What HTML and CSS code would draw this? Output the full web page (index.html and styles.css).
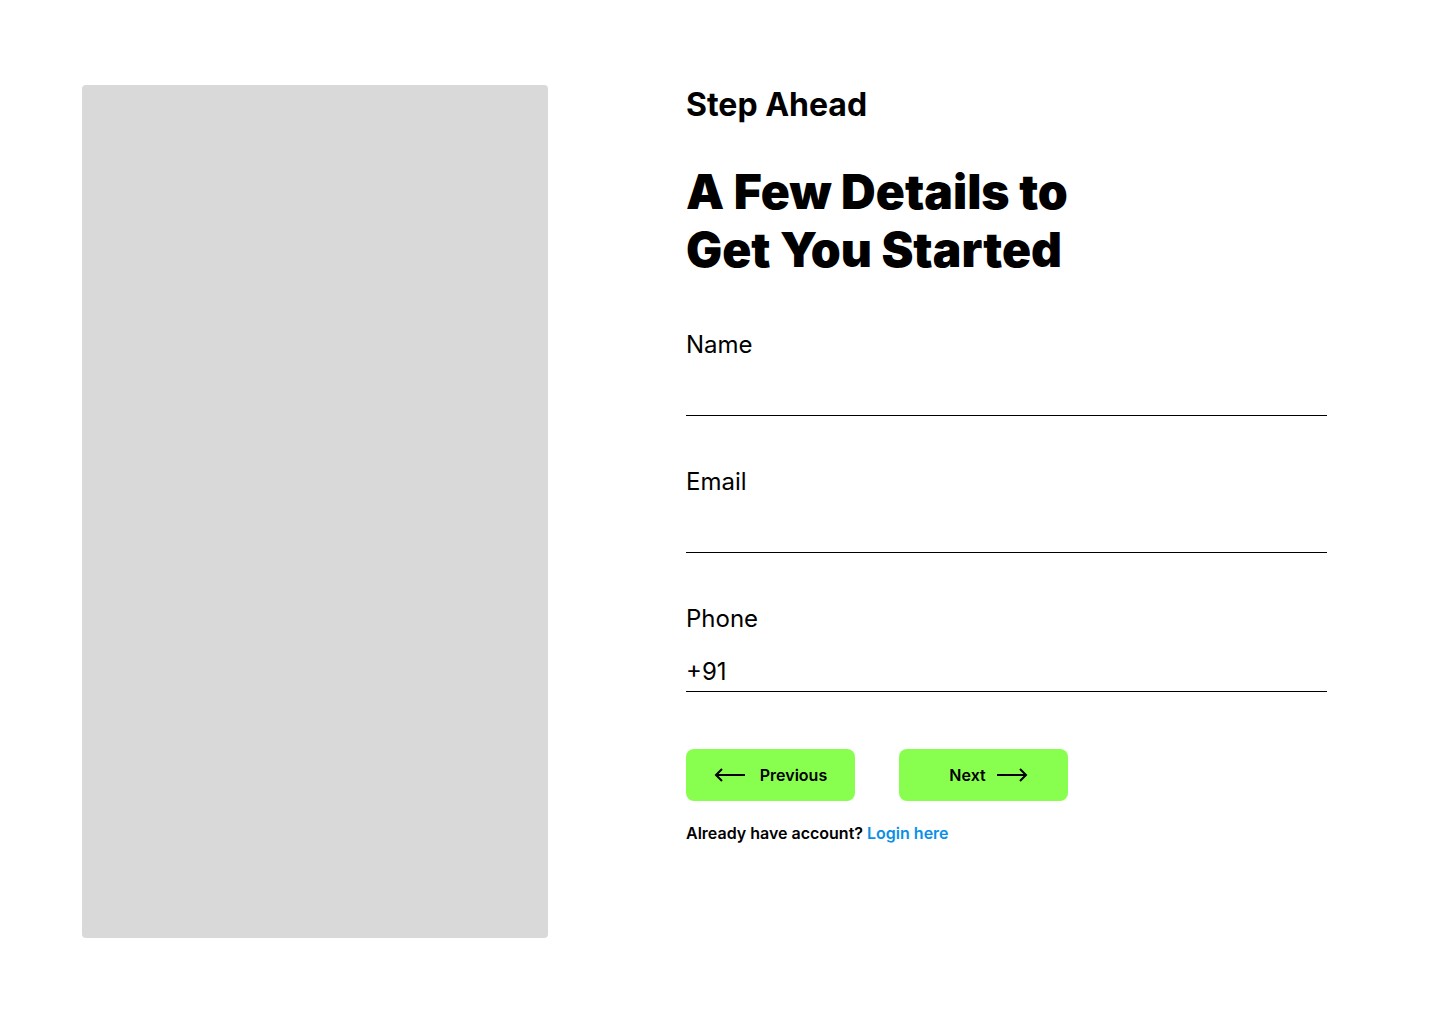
FILE: index.html
```html
<!DOCTYPE html>
<html lang="en">
<head>
<meta charset="utf-8">
<title>Step Ahead</title>
<link rel="stylesheet" href="styles.css">
</head>
<body>
<main class="page">
  <div class="visual"></div>
  <section class="form-col">
    <div class="brand">Step Ahead</div>
    <h1 class="title">A Few Details to<br>Get You Started</h1>
    <form class="form">
      <div class="fields">
        <label class="field">
          <span class="label">Name</span>
          <input class="input" type="text">
        </label>
        <label class="field">
          <span class="label">Email</span>
          <input class="input" type="email">
        </label>
        <label class="field">
          <span class="label">Phone</span>
          <input class="input input-phone" type="tel" value="+91">
        </label>
      </div>
      <div class="actions">
        <button type="button" class="btn btn-prev">
          <svg class="arrow" width="32" height="14" viewBox="0 0 32 14"><path d="M31 7H2M8 1L2 7l6 6" fill="none" stroke="#000" stroke-width="2"/></svg>
          <span>Previous</span>
        </button>
        <button type="button" class="btn btn-next">
          <span>Next</span>
          <svg class="arrow" width="32" height="14" viewBox="0 0 32 14"><path d="M1 7h29M24 1l6 6-6 6" fill="none" stroke="#000" stroke-width="2"/></svg>
        </button>
      </div>
      <p class="login">Already have account? <a href="#" class="link">Login here</a></p>
    </form>
  </section>
</main>
</body>
</html>
```
FILE: styles.css
```css
* { box-sizing: border-box; }
html, body { margin: 0; padding: 0; background: #fff; }
body { font-family: Inter, "Noto Sans", sans-serif; color: #000; }
.page {
  display: flex;
  gap: 138px;
  padding: 85px 0 0 82px;
}
.visual {
  width: 466px;
  height: 853px;
  background: #d9d9d9;
  border-radius: 4px;
  flex: none;
}
.form-col { width: 641px; }
.brand {
  font-size: 32px;
  font-weight: 700;
  line-height: 40px;
}
.title {
  margin: 38px 0 0;
  font-size: 48px;
  font-weight: 900;
  line-height: 58px;
  letter-spacing: 0;
}
.form { margin-top: 50px; }
.fields {
  display: flex;
  flex-direction: column;
  gap: 50px;
}
.field {
  display: flex;
  flex-direction: column;
}
.label {
  font-size: 24px;
  line-height: 32px;
}
.input {
  border: 0;
  border-bottom: 1px solid #000;
  outline: none;
  font: inherit;
  font-size: 24px;
  padding: 0;
  height: 41px;
  margin-top: 14px;
  color: #000;
  background: transparent;
}
.input-phone {
  height: 42px;
  padding-top: 2px;
  margin-top: 15px;
}
.actions {
  display: flex;
  gap: 44px;
  margin-top: 57px;
}
.btn {
  width: 169px;
  height: 52px;
  border: 0;
  border-radius: 8px;
  background: #88ff4f;
  font-family: Inter, sans-serif;
  font-size: 16px;
  font-weight: 600;
  color: #000;
  display: flex;
  align-items: center;
  justify-content: center;
  gap: 14px;
  padding: 0;
}
.btn-next {
  gap: 10px;
  padding-left: 10px;
}
.login {
  margin: 22px 0 0;
  font-size: 16px;
  font-weight: 600;
}
.link { color: #0b8fe6; text-decoration: none; }
```
